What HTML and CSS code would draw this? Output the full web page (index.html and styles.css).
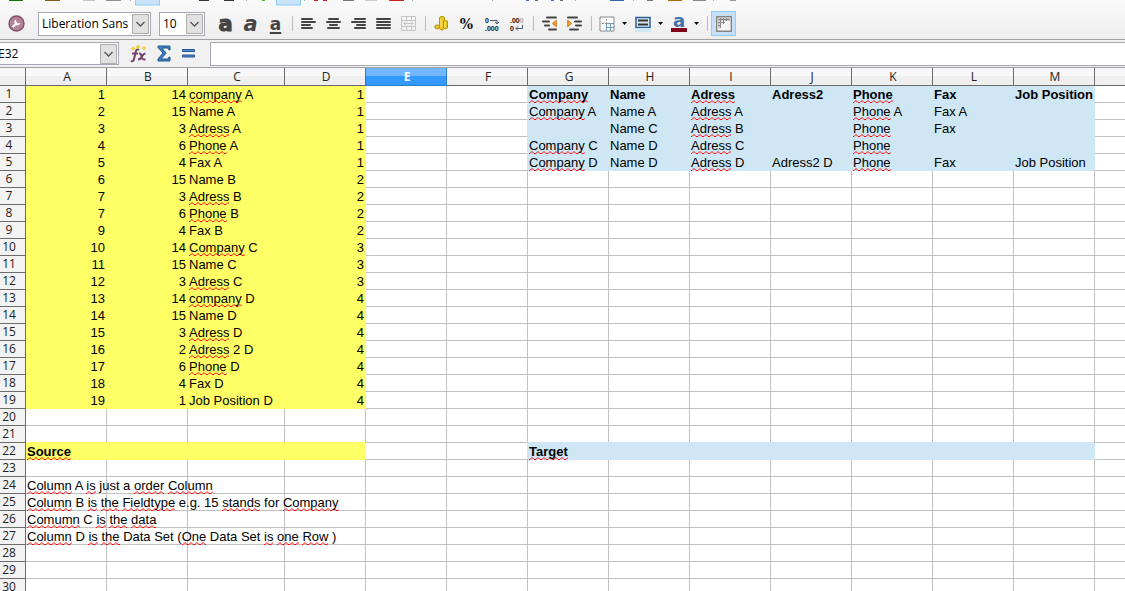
FILE: index.html
```html
<!DOCTYPE html>
<html lang="en">
<head>
    <meta charset="UTF-8">
    <meta name="viewport" content="width=device-width, initial-scale=1.0">
    <title>Spreadsheet</title>
    <link rel="stylesheet" href="styles.css">
</head>
<body>
<header class="toolbars">
    <!-- lower edge of the standard toolbar -->
    <svg class="standard-toolbar" aria-hidden="true">
        <rect x="9" width="14" height="1" fill="#0a7a0a"/>
        <rect x="45" width="15" height="1" fill="#806018"/>
        <rect x="83" width="12" height="1" fill="#c4c4c4"/>
        <rect x="106" width="15" height="1" fill="#909090"/>
        <rect x="130" width="1" height="1" fill="#a0a0a0"/>
        <rect x="135.500" y="-2" width="24" height="7" fill="#c9e3f8" stroke="#90ccf8"/>
        <rect x="199" width="10" height="1" fill="#333"/>
        <rect x="224" width="10" height="1" fill="#333"/>
        <rect x="246" width="1" height="1" fill="#aaa"/>
        <rect x="262" width="3" height="1" fill="#58b030"/>
        <rect x="276.500" y="-2" width="24" height="7" fill="#c9e3f8" stroke="#90ccf8"/>
        <rect x="304" width="1" height="1" fill="#aaa"/>
        <rect x="314" width="4" height="1" fill="#d02020"/>
        <rect x="323" width="4" height="1" fill="#d02020"/>
        <rect x="343" width="11" height="1" fill="#777"/>
        <rect x="365" width="12" height="1" fill="#ccc"/>
        <rect x="389" width="15" height="1" fill="#d02020"/>
        <rect x="412" width="1" height="1" fill="#aaa"/>
        <rect x="492" width="1" height="1" fill="#aaa"/>
        <rect x="526" width="3" height="1" fill="#4070b8"/>
        <rect x="535" width="3" height="1" fill="#666"/>
        <rect x="551" width="3" height="1" fill="#4070b8"/>
        <rect x="560" width="3" height="1" fill="#666"/>
        <rect x="575" width="1" height="1" fill="#aaa"/>
        <rect x="610" width="14" height="1" fill="#3465a4"/>
        <rect x="633" width="1" height="1" fill="#aaa"/>
        <rect x="647" width="6" height="1" fill="#777"/>
        <rect x="668" width="14" height="1" fill="#b06800"/>
        <rect x="693" width="13" height="1" fill="#888"/>
        <rect x="713" width="1" height="1" fill="#aaa"/>
        <rect x="730" width="6" height="1" fill="#999"/>
    </svg>

    <div class="formatting-bar">
        <button class="tool wrench" aria-label="Styles">
            <svg width="17" height="17" viewBox="0 0 17 17">
                <circle cx="8.500" cy="8.500" r="7.500" fill="#b58399" stroke="#7d5068" stroke-width="1.400"/>
                <path d="M4.500 12 8.500 8.500" stroke="#fff" stroke-width="2.200"/>
                <path d="M7.500 4.500a3.200 3.200 0 1 0 5 3.500L10 8.500 8.500 7z" fill="#fff"/>
            </svg>
        </button>
        <select class="combo font-name" aria-label="Font name"><option>Liberation Sans</option></select>
        <select class="combo font-size" aria-label="Font size"><option>10</option></select>

        <button class="tool letter bold" aria-label="Bold">a</button>
        <button class="tool letter italic" aria-label="Italic">a</button>
        <button class="tool letter underlined" aria-label="Underline">a</button>
        <span class="separator"></span>
        <button class="tool" aria-label="Align left">
            <svg class="lines" width="15" height="13" viewBox="0 0 15 13"><path d="M1 2h10M1 5h13M1 8h8M1 11h10"/></svg>
        </button>
        <button class="tool" aria-label="Center">
            <svg class="lines" width="15" height="13" viewBox="0 0 15 13"><path d="M3 2h9M1 5h13M4 8h7M2 11h11"/></svg>
        </button>
        <button class="tool" aria-label="Align right">
            <svg class="lines" width="15" height="13" viewBox="0 0 15 13"><path d="M4 2h10M1 5h13M6 8h8M4 11h10"/></svg>
        </button>
        <button class="tool" aria-label="Justify">
            <svg class="lines" width="15" height="13" viewBox="0 0 15 13"><path d="M1 2h13M1 5h13M1 8h13M1 11h13"/></svg>
        </button>
        <button class="tool" aria-label="Merge cells">
            <svg width="15" height="15" viewBox="0 0 15 15" fill="none" stroke="#c4c4c4">
                <path d="M.5.5h14v14H.5zM.5 4.500h14M.5 10.500h14M5.500.5v4M10.500.5v4M5.500 10.500v4M10.500 10.500v4M3 7.500h9M5 5.500 3 7.500l2 2M10 5.500l2 2-2 2"/>
            </svg>
        </button>
        <span class="separator"></span>
        <button class="tool" aria-label="Currency">
            <svg width="15" height="15" viewBox="0 0 15 15" fill="#e8c820" stroke="#b89408">
                <path d="M5.500 2q0-1.500 2.500-1.500T10.500 2v10.500q-1 1.500-2.500 1.500t-2.500-1.500z"/>
                <path d="M9.500 5q2-1.200 4 0v7q-2 1.500-4 0zM1 9.500q2-1.200 4.500 0v3q-3 1-4.500-.5z"/>
                <path d="M7 3v8M11 6v5" stroke="#fff080"/>
            </svg>
        </button>
        <button class="tool percent" aria-label="Percent">%</button>
        <button class="tool" aria-label="Add decimal place">
            <svg class="decimals" width="18" height="20" viewBox="0 0 18 20">
                <text x="2" y="9">0</text><text x="2" y="17">.000</text>
                <path d="M7 6.500h7v3M12 8l2 2 2-2"/>
            </svg>
        </button>
        <button class="tool" aria-label="Delete decimal place">
            <svg class="decimals" width="18" height="20" viewBox="0 0 18 20">
                <text x="2" y="9">.00<tspan class="faded">0</tspan></text><text x="2" y="17">0</text>
                <path d="M14.500 11v3.500H8M10 12.500l-2 2 2 2"/>
            </svg>
        </button>
        <span class="separator"></span>
        <button class="tool" aria-label="Decrease indent">
            <svg class="lines" width="17" height="15" viewBox="0 0 17 15">
                <path d="M6 1.500h9M2 5.500h6M4 9.500h4M8 13.500h7"/>
                <path class="indent-arrow" d="M15 4.500 11.500 7.500l3.500 3z"/>
            </svg>
        </button>
        <button class="tool" aria-label="Increase indent">
            <svg class="lines" width="17" height="15" viewBox="0 0 17 15">
                <path d="M2 1.500h9M9 5.500h6M10 9.500h5M4 13.500h8"/>
                <path class="indent-arrow" d="M2 4.500 5.500 7.500 2 10.500z"/>
            </svg>
        </button>
        <span class="separator"></span>
        <button class="tool with-menu" aria-label="Borders">
            <svg width="16" height="16" viewBox="0 0 16 16" fill="none">
                <path d="M1 1h14v14H1z" fill="#fafafa" stroke="#8a8a8a"/>
                <path d="M3 7.500h5M7.500 3v5" stroke="#999" stroke-dasharray="2 1"/>
                <path d="M7.500 15V7.500H15M7.500 11.500H15M11.500 7.500V15" stroke="#6d9dbd"/>
            </svg>
            <svg class="menu-arrow" width="5" height="3"><path d="M0 0h5L2.500 3z"/></svg>
        </button>
        <button class="tool with-menu" aria-label="Background color">
            <svg width="16" height="16" viewBox="0 0 16 16">
                <path d="M1 1.500h14v10H1z" fill="#dce8f0" stroke="#2a609c" stroke-width="1.500"/>
                <path d="M3 4.500h10M3 8.500h10" stroke="#333" stroke-width="2"/>
                <path d="M0 12h16v4H0z" fill="#cfe7f5"/>
            </svg>
            <svg class="menu-arrow" width="5" height="3"><path d="M0 0h5L2.500 3z"/></svg>
        </button>
        <button class="tool with-menu font-color" aria-label="Font color">
            <span>a</span>
            <svg class="menu-arrow" width="5" height="3"><path d="M0 0h5L2.500 3z"/></svg>
        </button>
        <span class="separator"></span>
        <button class="tool active" aria-label="Toggle grid lines">
            <svg width="16" height="16" viewBox="0 0 16 16" fill="none">
                <path d="M.7.7h14.600v14.600H.7z" fill="#f4f4f2" stroke="#858580" stroke-width="1.400"/>
                <path d="M2 2h12v3H2zM2 5h3v7H2z" fill="#ccc"/>
                <path d="M2 3.500h12M2 6.500h7M2 9.500h3M4.500 2v10M7.500 2v6M10.500 2v3" stroke="#888"/>
            </svg>
        </button>
    </div>
</header>

<div class="formula-bar">
    <div class="name-box">
        <select class="combo" aria-label="Name box"><option>E32</option></select>
    </div>
    <button class="tool" aria-label="Function wizard">
        <svg width="18" height="18" viewBox="0 0 18 18" fill="none">
            <path d="M9 5Q6 3 5.500 8L4 14q-.5 3-3 2M2 8.500h6" stroke="#74456a" stroke-width="2"/>
            <path d="M9 8.500q2-.5 2.500 3t4 3M15.500 8.500q-2 0-3.500 3t-4 3" stroke="#74456a" stroke-width="2"/>
            <path d="M3 1.500v4M1 3.500h4M8 0v4M6 2h4M14 1v4M12 3h4" stroke="#edcf35" stroke-width="1.500"/>
        </svg>
    </button>
    <button class="tool" aria-label="Sum">
        <svg width="14" height="17" viewBox="0 0 14 17">
            <path d="M1 1h12v4h-1L11 3H5l4 5.200L4 14h7l1-2h1v4H1v-2l5-6-5-5.500z" fill="#3d7fc4" stroke="#24568f"/>
        </svg>
    </button>
    <button class="tool" aria-label="Function">
        <svg width="14" height="9" viewBox="0 0 14 9" fill="#4a8fd0" stroke="#24568f"><path d="M.5.5h12v2H.5zM.5 6h12v2H.5z"/></svg>
    </button>
    <input class="formula-input" type="text" aria-label="Input line">
</div>

<main class="sheet">
    <table>
        <colgroup>
            <col class="col-row"><col><col><col class="col-wide"><col><col><col><col>
            <col><col><col><col><col><col><col class="col-rest">
        </colgroup>
        <thead><tr id="columns"></tr></thead>
        <tbody id="rows"></tbody>
    </table>
</main>

<script src="sheet.js"></script>
</body>
</html>
```

FILE: styles.css
```css
:root {
    --bar-background: #f1f1f1;
    --bar-border: #a0a0a0;
    --control-border: #a5a8b0;
    --head-border: #6c6c6c;
    --grid-line: #c0c0c0;
    --source-fill: #ffff66;
    --target-fill: #cfe7f5;
    --ui-font: "Open Sans", "Noto Sans", sans-serif;
}

* {
    box-sizing: border-box;
    margin: 0;
    padding: 0;
}

body {
    height: 100vh;
    display: flex;
    flex-direction: column;
    overflow: hidden;
    background-color: #fff;
    color: #000;
    font-family: "Liberation Sans", Arial, sans-serif;
    font-size: 13px;
}

/* Toolbars */
.toolbars {
    flex: none;
    background: linear-gradient(#fafafa, #eeeeee);
    border-bottom: 1px solid var(--bar-border);
}

.standard-toolbar {
    display: block;
    width: 100%;
    height: 8px;
}

.formatting-bar {
    height: 31px;
    display: flex;
    align-items: center;
    padding: 0 4px;
}

.tool {
    flex: none;
    width: 25px;
    height: 25px;
    display: flex;
    align-items: center;
    justify-content: center;
    background: none;
    border: 1px solid transparent;
    color: #333;
}

.tool.active {
    background-color: #c5dff8;
    border-color: #90ccf8;
}

.tool.wrench {
    margin-right: 9px;
}

.combo {
    appearance: none;
    height: 24px;
    padding: 0 20px 0 3px;
    border: 1px solid var(--control-border);
    border-radius: 0;
    background: #fff url("data:image/svg+xml,%3Csvg xmlns='http://www.w3.org/2000/svg' width='17' height='20'%3E%3Cpath d='M.5.5h16v19H.5z' fill='%23e1e1e1' stroke='%23adadad'/%3E%3Cpath d='M4.500 8l4 4 4-4' fill='none' stroke='%23555' stroke-width='1.300'/%3E%3C/svg%3E") no-repeat right 1px center;
    color: #000;
    font-family: var(--ui-font);
    font-size: 12px;
}

.font-name {
    width: 113px;
    margin-right: 8px;
}

.font-size {
    width: 46px;
    margin-right: 8px;
}

.letter {
    font: bold 21px/20px "DejaVu Sans", sans-serif;
    color: #444;
}

.bold {
    -webkit-text-stroke: 1px #444;
}

.italic {
    font-style: italic;
}

.underlined {
    font-size: 17px;
    text-decoration: underline;
    text-decoration-thickness: 2px;
    text-underline-offset: 2px;
}

.percent {
    font: bold 14px/20px "DejaVu Serif", serif;
    color: #111;
}

.separator {
    flex: none;
    width: 8px;
    height: 15px;
    background: linear-gradient(#bbb, #bbb) no-repeat center / 1px 100%;
}

.lines {
    stroke: #444;
    stroke-width: 2;
    stroke-linecap: round;
}

.indent-arrow {
    fill: #f5a030;
    stroke: #d87810;
    stroke-width: 1;
}

.decimals {
    font: bold 7px "Liberation Sans", sans-serif;
    fill: #111;
}

.decimals path {
    fill: none;
    stroke: #4a5a78;
}

.faded {
    fill: #aaa;
}

.with-menu {
    width: 36px;
    justify-content: flex-start;
    gap: 7px;
    padding-left: 3px;
}

.menu-arrow {
    fill: #000;
}

.font-color span {
    width: 16px;
    height: 16px;
    border-bottom: 4px solid #80001a;
    color: #3c72b0;
    font: bold 18px/9px "DejaVu Sans", sans-serif;
}

/* Formula bar */
.formula-bar {
    flex: none;
    height: 28px;
    display: flex;
    align-items: center;
    padding-top: 1px;
    padding-bottom: 1px;
    background-color: var(--bar-background);
    border-bottom: 1px solid var(--bar-border);
}

.name-box {
    width: 119px;
    margin-right: 7px;
    overflow: hidden;
}

.name-box .combo {
    width: 125px;
    height: 23px;
    margin-left: -6px;
    display: block;
}

.formula-input {
    flex: 1;
    min-width: 0;
    height: 24px;
    margin-left: 9px;
    padding: 0 4px;
    border: 1px solid var(--control-border);
    border-right: none;
    background-color: #fff;
    font-family: var(--ui-font);
    font-size: 12px;
}

/* Sheet */
.sheet {
    flex: 1;
    min-height: 0;
    overflow: hidden;
}

table {
    width: 100%;
    table-layout: fixed;
    border-collapse: separate;
    border-spacing: 0;
}

col {
    width: 81px;
}

.col-row {
    width: 26px;
}

.col-wide {
    width: 97px;
}

.col-rest {
    width: auto;
}

th {
    position: relative;
    z-index: 1;
    border-right: 1px solid var(--head-border);
    border-bottom: 1px solid var(--head-border);
    background-color: #f3f3f3;
    color: #222;
    font-family: var(--ui-font);
    font-size: 12px;
    font-weight: normal;
    line-height: 16px;
}

thead th {
    height: 18px;
    padding-left: 2px;
    background: linear-gradient(#f8f8f8 50%, #efefef 50%);
}

thead th.selected {
    background: linear-gradient(#72b7ff 50%, #3399ff 50%);
    border-color: #2a80d0;
    color: #fff;
    font-weight: bold;
}

tbody th {
    padding-right: 7px;
}

th:last-child {
    border-right: none;
}

td {
    height: 17px;
    padding: 2px 1px 0;
    border-right: 1px solid var(--grid-line);
    border-bottom: 1px solid var(--grid-line);
    line-height: 14px;
    white-space: nowrap;
}

td:last-child {
    border-right: none;
}

td.number {
    text-align: right;
}

td.heading {
    font-weight: bold;
}

/* filled cells cover the grid lines around them */
td.source {
    background-color: var(--source-fill);
    border-color: var(--source-fill);
    box-shadow: 0 -1px var(--source-fill);
}

td.target {
    background-color: var(--target-fill);
    border-color: var(--target-fill);
    box-shadow: -1px -1px var(--target-fill);
}

/* spell checker mark */
.misspelt {
    padding-bottom: 1px;
    background: url("data:image/svg+xml,%3Csvg xmlns='http://www.w3.org/2000/svg' width='6' height='3'%3E%3Cpath d='M-1 1.500 0 2.500 1 2.500 3 .5 5 2.500 6 2.500 7 1.500' fill='none' stroke='%23f00'/%3E%3C/svg%3E") repeat-x left bottom;
}
```

FILE: sheet.js
```js
const COLUMNS = ['A', 'B', 'C', 'D', 'E', 'F', 'G', 'H', 'I', 'J', 'K', 'L', 'M', ''];
const ROW_COUNT = 30;
const SELECTED = 'E';

// words between underscores are marked by the spell checker
const source = [
    [1, 14, '_company_ A', 1],
    [2, 15, 'Name A', 1],
    [3, 3, '_Adress_ A', 1],
    [4, 6, '_Phone_ A', 1],
    [5, 4, 'Fax A', 1],
    [6, 15, 'Name B', 2],
    [7, 3, '_Adress_ B', 2],
    [7, 6, '_Phone_ B', 2],
    [9, 4, 'Fax B', 2],
    [10, 14, '_Company_ C', 3],
    [11, 15, 'Name C', 3],
    [12, 3, '_Adress_ C', 3],
    [13, 14, '_company_ D', 4],
    [14, 15, 'Name D', 4],
    [15, 3, '_Adress_ D', 4],
    [16, 2, '_Adress_ 2 D', 4],
    [17, 6, '_Phone_ D', 4],
    [18, 4, 'Fax D', 4],
    [19, 1, 'Job Position D', 4]
];

const target = [
    ['_Company_', 'Name', '_Adress_', 'Adress2', '_Phone_', 'Fax', 'Job Position'],
    ['_Company_ A', 'Name A', '_Adress_ A', '', '_Phone_ A', 'Fax A', ''],
    ['', 'Name C', '_Adress_ B', '', '_Phone_', 'Fax', ''],
    ['_Company_ C', 'Name D', '_Adress_ C', '', '_Phone_', '', ''],
    ['_Company_ D', 'Name D', '_Adress_ D', 'Adress2 D', '_Phone_', 'Fax', 'Job Position']
];

const notes = {
    24: '_Column_ A _is_ just a _order_ _Column_',
    25: '_Column_ B _is_ _the_ _Fieldtype_ e.g. 15 _stands_ for _Company_',
    26: '_Comumn_ C _is_ _the_ _data_',
    27: '_Column_ D _is_ _the_ Data Set (_One_ Data Set _is_ _one_ _Row_ )'
};

function cellValue(row, col) {
    if (row <= source.length && col < 4) return source[row - 1][col];
    if (row <= target.length && col >= 6 && col < 13) return target[row - 1][col - 6];
    if (row === 22 && col === 0) return '_Source_';
    if (row === 22 && col === 6) return '_Target_';
    if (col === 0 && notes[row]) return notes[row];
    return '';
}

function cellClass(row, col, value) {
    const classes = [];
    if (col < 4 && (row <= source.length || row === 22)) classes.push('source');
    if (col >= 6 && col < 13 && (row <= target.length || row === 22)) classes.push('target');
    if (typeof value === 'number') classes.push('number');
    if (row === 22 || (row === 1 && col >= 6)) classes.push('heading');
    return classes.join(' ');
}

document.getElementById('columns').innerHTML = '<th></th>' + COLUMNS.map(name =>
    `<th scope="col"${name === SELECTED ? ' class="selected"' : ''}>${name}</th>`
).join('');

let html = '';
for (let row = 1; row <= ROW_COUNT; row++) {
    html += `<tr><th scope="row">${row}</th>`;
    COLUMNS.forEach((name, col) => {
        const value = cellValue(row, col);
        const text = String(value).replace(/_([^_]+)_/g, '<span class="misspelt">$1</span>');
        html += `<td class="${cellClass(row, col, value)}">${text}</td>`;
    });
    html += '</tr>';
}
document.getElementById('rows').innerHTML = html;
```
